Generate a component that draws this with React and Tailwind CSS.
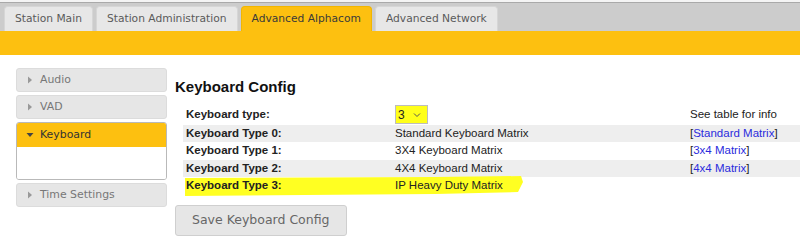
import React from "react";

const tabs = [
  { label: "Station Main", active: false },
  { label: "Station Administration", active: false },
  { label: "Advanced Alphacom", active: true },
  { label: "Advanced Network", active: false },
];

const menu = [
  { label: "Audio", open: false },
  { label: "VAD", open: false },
  { label: "Keyboard", open: true },
  { label: "Time Settings", open: false },
];

const rows = [
  { name: "Keyboard Type 0:", desc: "Standard Keyboard Matrix", link: "Standard Matrix" },
  { name: "Keyboard Type 1:", desc: "3X4 Keyboard Matrix", link: "3x4 Matrix" },
  { name: "Keyboard Type 2:", desc: "4X4 Keyboard Matrix", link: "4x4 Matrix" },
  { name: "Keyboard Type 3:", desc: "IP Heavy Duty Matrix", link: null },
];

function Caret({ open }) {
  return open ? (
    <svg width="8" height="8" viewBox="0 0 8 8" className="mr-[6px]">
      <path d="M0.5 2 L7.5 2 L4 6 Z" fill="#444" />
    </svg>
  ) : (
    <svg width="8" height="8" viewBox="0 0 8 8" className="mr-[6px]">
      <path d="M2 0.5 L6 4 L2 7.5 Z" fill="#999" />
    </svg>
  );
}

export default function App() {
  const verdana = { fontFamily: '"DejaVu Sans", Verdana, sans-serif' };
  const arial = { fontFamily: '"Liberation Sans", Arial, sans-serif' };

  return (
    <div className="w-[800px] h-[241px] bg-white overflow-hidden" style={verdana}>
      {/* tab strip */}
      <div className="pt-[2px] bg-[#f4f4f4]">
        <div className="h-[29px] bg-[#cccccc] border-t border-[#a9a9a9] flex items-end gap-[3px] pl-[4px]">
          {tabs.map((t) => (
            <div
              key={t.label}
              className={`h-[25px] px-[10px] flex items-center rounded-t-[4px] border border-b-0 text-[10.7px] ${
                t.active
                  ? "bg-[#fdc010] border-[#f2b600] text-[#3a3a3a]"
                  : "bg-[#e7e7e7] border-[#d6d6d6] text-[#5a5a5a]"
              }`}
            >
              {t.label}
            </div>
          ))}
        </div>
      </div>
      <div className="h-[24px] bg-[#fdc010]" />

      <div className="flex pt-[13px]">
        {/* side menu */}
        <div className="ml-[16px] w-[151px] flex flex-col gap-[3px]">
          {menu.map((m) =>
            m.open ? (
              <div key={m.label} className="rounded-[3px] border border-[#b9b9b9] overflow-hidden">
                <div className="h-[24px] bg-[#fdc010] flex items-center pl-[9px] text-[10.9px] text-[#333]">
                  <Caret open />
                  {m.label}
                </div>
                <div className="h-[32px] bg-white" />
              </div>
            ) : (
              <div
                key={m.label}
                className="h-[24px] rounded-[3px] bg-[#e6e6e6] border border-[#dcdcdc] flex items-center pl-[9px] text-[10.9px] text-[#777]"
              >
                <Caret />
                {m.label}
              </div>
            )
          )}
        </div>

        {/* content */}
        <div className="ml-[8px] flex-1" style={arial}>
          <h1 className="text-[15px] font-bold text-[#111] leading-[18px] mt-[10px]">Keyboard Config</h1>
          <table className="mt-[8px] ml-[8px] w-[calc(100%-8px)] text-[11.5px] text-[#222] border-collapse">
            <tbody>
              <tr className="h-[21px]">
                <td className="pl-[3px] w-[212px] font-bold">Keyboard type:</td>
                <td className="w-[295px]">
                  <span className="inline-flex items-center h-[19px] w-[33px] border border-[#bdbdbd] bg-[#ffff1a] pl-[2px] text-[12px] text-[#222]">
                    3
                    <svg width="8" height="6" viewBox="0 0 8 6" className="ml-[8px]">
                      <path d="M1 1.5 L4 4.5 L7 1.5" fill="none" stroke="#555" strokeWidth="1" />
                    </svg>
                  </span>
                </td>
                <td>See table for info</td>
              </tr>
              {rows.map((r, i) => (
                <tr key={r.name} className={`h-[17px] ${i % 2 === 0 && r.link ? "bg-[#eeeeee]" : ""}`}>
                  <td className="pl-[3px] font-bold relative">
                    {!r.link && (
                      <svg
                        className="absolute left-[2px] top-[-1px]"
                        width="340"
                        height="21"
                        viewBox="0 0 340 21"
                      >
                        <path d="M0 2 L250 1 L336 0 L338 6 L333 16 L250 18 L120 19 L0 20 Z" fill="#ffff22" />
                      </svg>
                    )}
                    <span className="relative">{r.name}</span>
                  </td>
                  <td className="relative">{r.desc}</td>
                  <td>
                    {r.link && (
                      <span>
                        [<span className="text-[#2b2bdd]">{r.link}</span>]
                      </span>
                    )}
                  </td>
                </tr>
              ))}
            </tbody>
          </table>
          <button
            className="mt-[11px] h-[31px] px-[16px] rounded-[3px] bg-[#e6e6e6] border border-[#cfcfcf] text-[12.5px] text-[#666]"
            style={verdana}
          >
            Save Keyboard Config
          </button>
        </div>
      </div>
    </div>
  );
}
